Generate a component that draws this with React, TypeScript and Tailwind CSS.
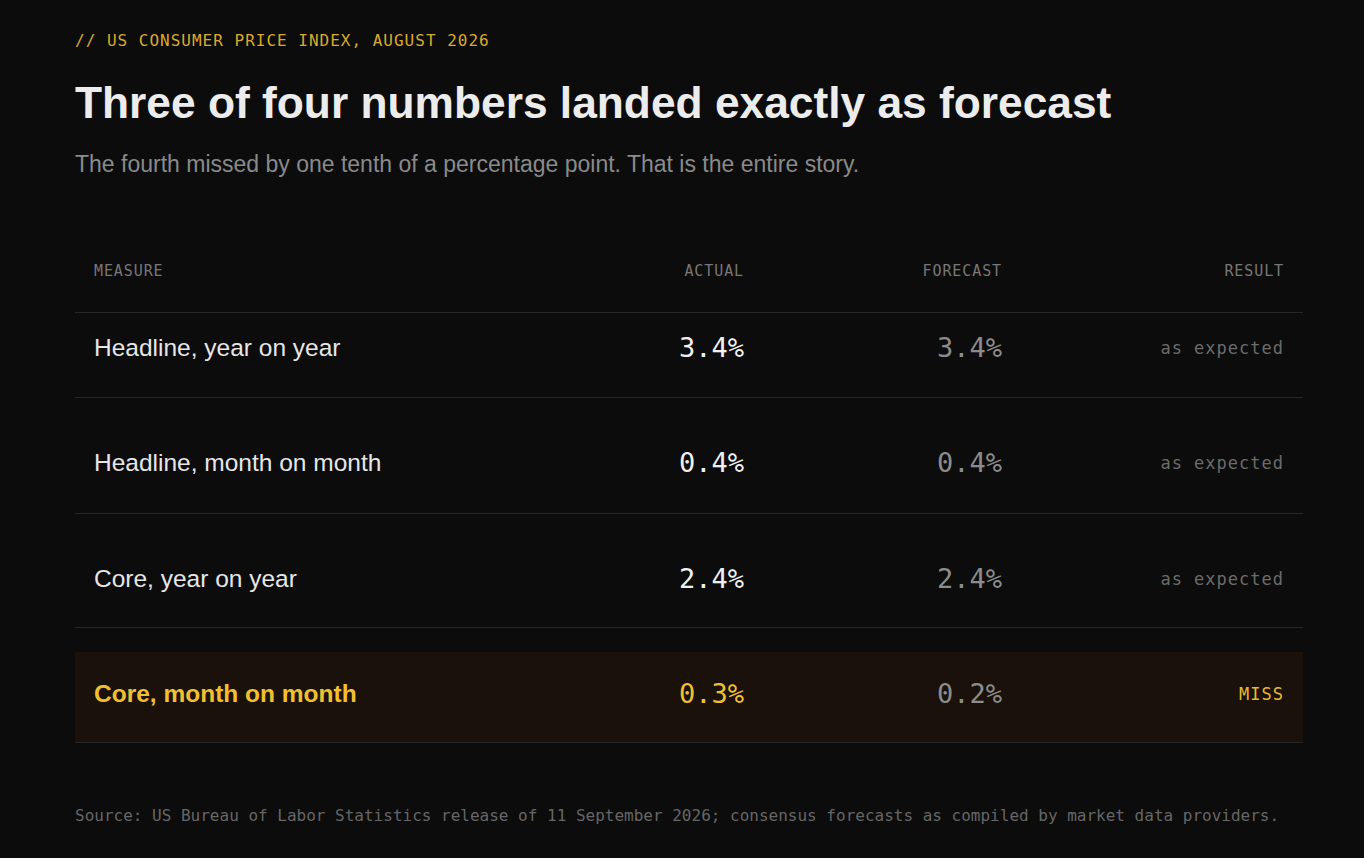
import React from "react";

const mono = "font-['DejaVu_Sans_Mono',monospace]";
const sans = "font-['Liberation_Sans',Arial,sans-serif]";

type Row = { label: string; actual: string; forecast: string; result: string; pad: string };

const rows: Row[] = [
  { label: "Headline, year on year", actual: "3.4%", forecast: "3.4%", result: "as expected", pad: "pt-[20px] pb-[34px]" },
  { label: "Headline, month on month", actual: "0.4%", forecast: "0.4%", result: "as expected", pad: "pt-[50px] pb-[35px]" },
  { label: "Core, year on year", actual: "2.4%", forecast: "2.4%", result: "as expected", pad: "pt-[50px] pb-[33px]" },
];

const grid = "grid grid-cols-[1fr_200px_258px_282px] items-center pl-[19px] pr-[19px]";

export default function App() {
  return (
    <div className="min-h-[858px] w-full bg-[#0c0c0c] pl-[75px] pt-[29px]">
      <div className="w-[1228px]">
        <div className={`${mono} text-[16px] leading-[24px] tracking-[1px] text-[#d9aa2b]`}>
          // US CONSUMER PRICE INDEX, AUGUST 2026
        </div>
        <h1 className={`${sans} mt-[24px] text-[44.3px] font-bold leading-[52px] text-[#ececec]`}>
          Three of four numbers landed exactly as forecast
        </h1>
        <p className={`${sans} mt-[20px] text-[23px] leading-[30px] text-[#8a8a8a]`}>
          The fourth missed by one tenth of a percentage point. That is the entire story.
        </p>

        <div className="mt-[82px]">
          <div className={`${grid} ${mono} border-b border-[#262626] pb-[31px] text-[15px] leading-[20px] tracking-[0.9px] text-[#777777]`}>
            <div>MEASURE</div>
            <div className="text-right">ACTUAL</div>
            <div className="text-right">FORECAST</div>
            <div className="text-right">RESULT</div>
          </div>

          {rows.map((r) => (
            <div key={r.label} className={`${grid} border-b border-[#262626] ${r.pad}`}>
              <div className={`${sans} text-[24.5px] leading-[30px] text-[#e6e6e6]`}>{r.label}</div>
              <div className={`${mono} text-right text-[27px] leading-[30px] text-[#f0f0f0]`}>{r.actual}</div>
              <div className={`${mono} text-right text-[27px] leading-[30px] text-[#8c8c8c]`}>{r.forecast}</div>
              <div className={`${mono} text-right text-[17px] leading-[30px] tracking-[1px] text-[#6b6b6b]`}>{r.result}</div>
            </div>
          ))}

          <div className={`${grid} mt-[24px] border-b border-[#262626] bg-[#1a120a] pt-[27px] pb-[33px]`}>
            <div className={`${sans} text-[24.5px] font-bold leading-[30px] text-[#f0c030]`}>Core, month on month</div>
            <div className={`${mono} text-right text-[27px] leading-[30px] text-[#f0c030]`}>0.3%</div>
            <div className={`${mono} text-right text-[27px] leading-[30px] text-[#8c8c8c]`}>0.2%</div>
            <div className={`${mono} text-right text-[17px] leading-[30px] tracking-[1px] text-[#e8b931]`}>MISS</div>
          </div>
        </div>

        <div className={`${mono} mt-[61px] text-[16px] leading-[24px] text-[#666666] whitespace-nowrap`}>
          Source: US Bureau of Labor Statistics release of 11 September 2026; consensus forecasts as compiled by market data providers.
        </div>
      </div>
    </div>
  );
}
